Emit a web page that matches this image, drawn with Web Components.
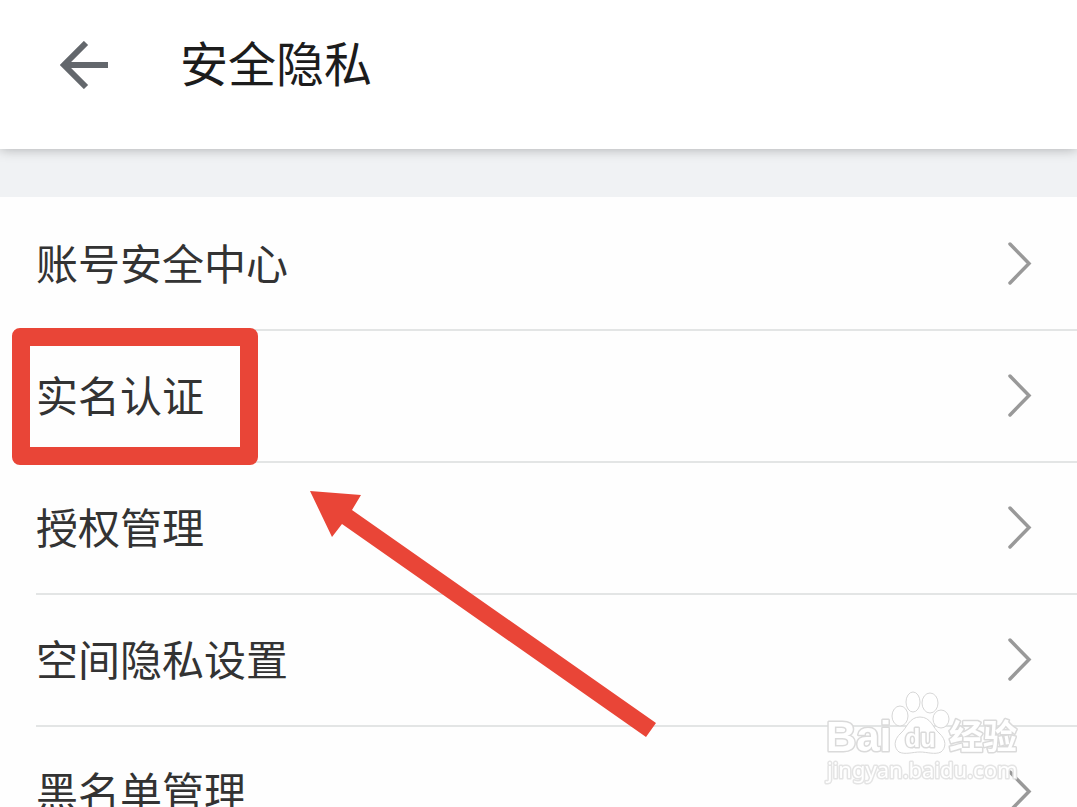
<!DOCTYPE html>
<html lang="zh-CN">
<head>
<meta charset="utf-8">
<meta name="viewport" content="width=device-width, initial-scale=1">
<title>安全隐私</title>
<style>
html { scrollbar-width: none; }
body { margin: 0; background: #fefefe; font-family: "Noto Sans CJK SC", sans-serif; color: #333; }
</style>
</head>
<body>
<privacy-page>
  <app-bar slot="bar">安全隐私</app-bar>
  <setting-row>账号安全中心</setting-row>
  <setting-row marked>实名认证</setting-row>
  <setting-row>授权管理</setting-row>
  <setting-row>空间隐私设置</setting-row>
  <setting-row>黑名单管理</setting-row>
  <pointer-arrow slot="overlay"></pointer-arrow>
  <site-watermark slot="overlay"></site-watermark>
</privacy-page>

<script>
const define = (name, html) => {
  const template = document.createElement('template');
  template.innerHTML = html;
  customElements.define(name, class extends HTMLElement {
    constructor() {
      super();
      this.attachShadow({ mode: 'open' }).append(template.content.cloneNode(true));
    }
  });
};

define('privacy-page', `
<style>
:host { display: block; position: relative; min-height: 100vh; overflow: hidden; }
main { padding-top: 48px; background: #f0f2f4; }
.list { display: flex; flex-direction: column; background: #fefefe; }
</style>
<slot name="bar"></slot>
<main><nav class="list"><slot></slot></nav></main>
<slot name="overlay"></slot>`);

define('app-bar', `
<style>
:host { display: block; position: relative; background: #fff; box-shadow: 0 0 12px rgba(0,0,0,.3); }
header { display: flex; align-items: center; gap: 72px; padding: 29px 60px 48px; }
button { display: flex; padding: 0; border: 0; background: none; }
h1 { margin: 0; padding-bottom: 8px; font-size: 48px; line-height: 64px; font-weight: 400; color: #1c1c1c; }
</style>
<header>
  <button type="button" aria-label="返回">
    <svg width="48" height="48" viewBox="0 0 48 48" fill="none" stroke="#63676c" stroke-width="6"><path d="M48 24H6M26 2 4 24l22 22"/></svg>
  </button>
  <h1><slot></slot></h1>
</header>`);

define('setting-row', `
<style>
:host { display: block; position: relative; --line: #e3e5e5; }
:host(:first-of-type) { --line: transparent; }
a { display: flex; align-items: center; justify-content: space-between; box-sizing: border-box; min-height: 132px; margin-left: 36px; padding-right: 44px; border-top: 2px solid var(--line); color: #333; text-decoration: none; font-size: 42px; line-height: 64px; }
span { padding-bottom: 4px; }
.mark { display: none; }
:host([marked]) .mark { display: block; position: absolute; z-index: 1; left: 12px; top: -1px; box-sizing: border-box; width: 246px; height: 137px; border: 18px solid #e94537; border-radius: 8px; pointer-events: none; }
</style>
<a href="#"><span><slot></slot></span>
  <svg width="26" height="44" viewBox="0 0 26 44" fill="none" stroke="#999" stroke-width="3.500" stroke-linecap="round"><path d="M3 2 22 21.500 3 41"/></svg>
</a>
<div class="mark"></div>`);

define('pointer-arrow', `
<style>
:host { position: absolute; z-index: 1; left: 310px; top: 490px; pointer-events: none; }
svg { display: block; }
</style>
<svg width="348" height="248" viewBox="0 0 348 248" fill="#e94537"><path d="M0 1 51 5 42 20 346 233 336 247 32 34 22 47Z"/></svg>`);

define('site-watermark', `
<style>
:host { position: fixed; z-index: 2; right: 56px; bottom: 20px; pointer-events: none; }
svg { display: block; }
text { paint-order: stroke; stroke-linejoin: round; }
.brand { font: 700 42px "Liberation Sans", sans-serif; }
.du { font: 700 25px "Liberation Sans", sans-serif; }
.cn { font: 700 34px "Noto Sans CJK SC", sans-serif; }
.url { font: 400 22px "Noto Sans", sans-serif; }
</style>
<svg width="198" height="98" viewBox="0 0 198 98" fill="#fff" stroke="#dadada" stroke-width="3">
  <text class="brand" x="3" y="62">Bai</text>
  <g stroke="#d6d6d6" stroke-width="1">
    <ellipse cx="77" cy="27" rx="8" ry="10"/>
    <ellipse cx="90" cy="13" rx="7" ry="10"/>
    <ellipse cx="107" cy="14" rx="8" ry="10"/>
    <ellipse cx="118" cy="30" rx="8" ry="9"/>
    <path d="M97 28C86 28 84 39 78 44C70 51 71 59 76 63C82 66 90 63 97 63C104 63 112 66 118 63C123 59 124 51 116 44C110 39 108 28 97 28Z"/>
  </g>
  <text class="du" x="82" y="58">du</text>
  <text class="cn" x="126" y="60">经验</text>
  <text class="url" x="4" y="89" stroke="#e4e4e4">jingyan.baidu.com</text>
</svg>`);
</script>
</body>
</html>
